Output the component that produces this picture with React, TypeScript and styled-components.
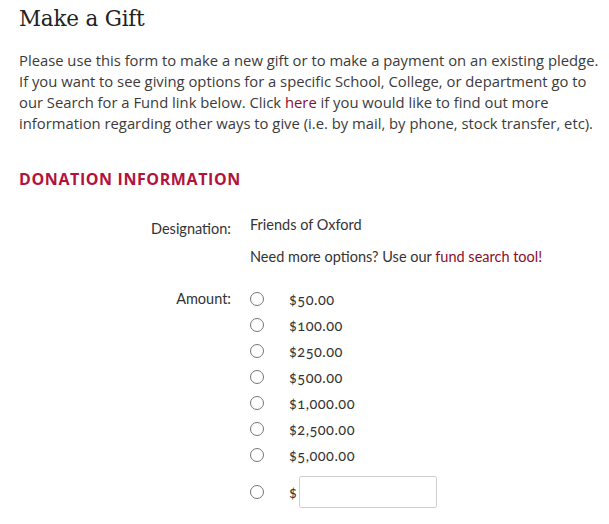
import React from "react";
import styled, { createGlobalStyle } from "styled-components";

const GlobalStyle = createGlobalStyle`
  html, body {
    margin: 0;
    padding: 0;
    background: #ffffff;
  }
`;

const amounts = ["$50.00", "$100.00", "$250.00", "$500.00", "$1,000.00", "$2,500.00", "$5,000.00"];

export default function App() {
  return (
    <>
      <GlobalStyle />
      <Page>
        <Title>Make a Gift</Title>
        <Intro>
          Please use this form to make a new gift or to make a payment on an existing pledge.<br />
          If you want to see giving options for a specific School, College, or department go to<br />
          our Search for a Fund link below. Click <RedLink href="#">here</RedLink> if you would like to find out more<br />
          information regarding other ways to give (i.e. by mail, by phone, stock transfer, etc).
        </Intro>

        <SectionTitle>Donation Information</SectionTitle>

        <FormGrid>
          <Label>Designation:</Label>
          <Field>
            <div>Friends of Oxford</div>
            <div>
              Need more options? Use our <RedLink href="#">fund search tool!</RedLink>
            </div>
          </Field>

          <Label>Amount:</Label>
          <Options>
            {amounts.map((a) => (
              <Option key={a}>
                <Radio type="radio" name="amount" />
                <Amount>{a}</Amount>
              </Option>
            ))}
            <Option $custom>
              <Radio type="radio" name="amount" />
              <Amount>$</Amount>
              <AmountInput type="text" />
            </Option>
          </Options>
        </FormGrid>
      </Page>
    </>
  );
}

const Page = styled.div`
  padding: 4px 19px 0 19px;
  color: #3b3b3b;
`;

const Title = styled.h1`
  margin: 0;
  font-family: "DejaVu Serif", "Liberation Serif", serif;
  font-weight: normal;
  font-size: 21.5px;
  line-height: 30px;
  color: #222;
  letter-spacing: -0.2px;
`;

const Intro = styled.p`
  margin: 16px 0 0;
  font-family: "Open Sans", sans-serif;
  font-size: 14.8px;
  line-height: 21px;
  white-space: nowrap;
  color: #3b3b3b;
`;

const RedLink = styled.a`
  color: #8a0d2a;
  text-decoration: none;
`;

const SectionTitle = styled.h2`
  margin: 34px 0 0;
  font-family: "Open Sans", sans-serif;
  font-weight: 700;
  font-size: 16px;
  line-height: 22px;
  letter-spacing: 0.6px;
  text-transform: uppercase;
  color: #b3123d;
`;

const FormGrid = styled.div`
  display: grid;
  grid-template-columns: 212px 1fr;
  column-gap: 19px;
  row-gap: 20px;
  margin-top: 26px;
  font-family: "Lato", "Open Sans", sans-serif;
  font-size: 14.5px;
  color: #333;
`;

const Label = styled.div`
  text-align: right;
  padding-top: 4px;
  line-height: 18px;
`;

const Field = styled.div`
  display: flex;
  flex-direction: column;
  gap: 14px;
  line-height: 18px;
`;

const Options = styled.div`
  display: flex;
  flex-direction: column;
  gap: 8px;
  padding-top: 4px;
`;

const Option = styled.label<{ $custom?: boolean }>`
  display: flex;
  align-items: center;
  height: ${(p) => (p.$custom ? "32px" : "18px")};
  margin-top: ${(p) => (p.$custom ? "4px" : "0")};
`;

const Radio = styled.input`
  appearance: none;
  box-sizing: border-box;
  width: 14px;
  height: 14px;
  margin: 0 25px 0 0;
  border: 1px solid #767676;
  border-radius: 50%;
  background: #fff;
  &:checked {
    border: 4px solid #8a0d2a;
  }
`;

const Amount = styled.span`
  font-variant-numeric: oldstyle-nums;
  letter-spacing: 0.5px;
  font-size: 14.5px;
`;

const AmountInput = styled.input`
  width: 138px;
  height: 32px;
  box-sizing: border-box;
  margin-left: 2px;
  border: 1px solid #cfcfcf;
  border-radius: 2px;
  font-size: 14px;
  padding: 4px 6px;
`;
